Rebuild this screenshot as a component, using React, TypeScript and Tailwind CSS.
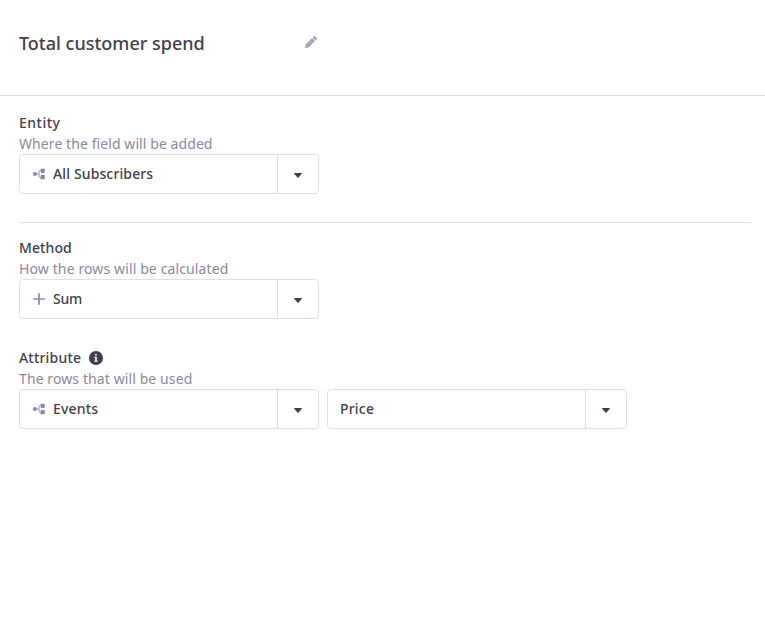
import type { ReactNode } from 'react'

function NodesIcon() {
  return (
    <svg width="14" height="14" viewBox="0 0 14 14" fill="#8c89a6" className="shrink-0">
      <circle cx="2.900" cy="7" r="2.100" />
      <path d="M4 6.500h2v1H4z" />
      <path d="M9.500 3.300h-.7C7.600 3.300 7 4 7 5.300v3.400c0 1.300.6 2 1.800 2h.7" fill="none" stroke="#8c89a6" strokeWidth="1" />
      <rect x="8.600" y="1.700" width="4.200" height="4.200" rx=".8" />
      <rect x="8.600" y="8.100" width="4.200" height="4.200" rx=".8" />
    </svg>
  )
}

function PlusIcon() {
  return (
    <svg width="14" height="14" viewBox="0 0 14 14" fill="none" stroke="#8c89a6" strokeWidth="1.700" className="shrink-0">
      <path d="M7 1.200v11.600M1.200 7h11.600" />
    </svg>
  )
}

function PencilIcon() {
  return (
    <svg width="14" height="14" viewBox="0 0 14 14" fill="#a9a6c0">
      <path d="M1 13l.5-3.500 6.500-6.500 3 3-6.500 6.500z" />
      <path d="M8.600 2.400l.9-.9c.6-.6 1.300-.6 1.900 0l1.100 1.100c.6.6.6 1.300 0 1.900l-.9.9z" />
    </svg>
  )
}

function InfoIcon() {
  return (
    <svg width="14" height="14" viewBox="0 0 14 14">
      <circle cx="7" cy="7" r="7" fill="#41404d" />
      <path d="M6.100 3h1.700v1.600H6.100zM5.300 5.800h2.500v3.900h.9v1H5.300v-1h.9V6.800h-.9z" fill="#fff" />
    </svg>
  )
}

function Select({ icon, children }: { icon?: ReactNode; children: ReactNode }) {
  return (
    <button type="button" className="flex h-10 w-[300px] rounded border border-[#dfdeec] bg-white text-left">
      <span className="flex h-full flex-1 items-center gap-[7px] pl-3 text-sm font-medium text-[#41404d]">
        {icon}
        {children}
      </span>
      <span className="flex h-full w-[41px] items-center justify-center border-l border-[#dfdeec]">
        <svg width="8" height="5" viewBox="0 0 8 5" fill="#41404d" className="mt-[3px]">
          <path d="M.5 0h7c.4 0 .6.500.3.800L4.600 4.500c-.3.400-.9.400-1.200 0L.2.800C-.1.500.1 0 .5 0z" />
        </svg>
      </span>
    </button>
  )
}

function Label({ children }: { children: ReactNode }) {
  return <h2 className="flex h-[21px] items-center text-sm leading-[21px] font-medium text-[#41404d]">{children}</h2>
}

function Hint({ children }: { children: ReactNode }) {
  return <p className="h-[21px] text-sm leading-[21px] text-[#8c89a0]">{children}</p>
}

export default function App() {
  return (
    <div className="min-h-[630px] bg-white font-['Noto_Sans',sans-serif]">
      <header className="flex h-24 items-start border-b border-[#d9d9dc] pt-[30px] pl-[19px]">
        <h1 className="w-[285px] text-lg leading-[27px] font-medium text-[#41404d]">Total customer spend</h1>
        <button type="button" aria-label="Edit name" className="mt-[5px]">
          <PencilIcon />
        </button>
      </header>
      <main className="pr-[14px] pl-[19px]">
        <section className="h-[127px] border-b border-[#dfdeec] pt-4">
          <Label><span className="tracking-[0.500px]">Entity</span></Label>
          <Hint><span className="tracking-[0.080px]">Where the field will be added</span></Hint>
          <Select icon={<NodesIcon />}><span className="tracking-[0.130px]">All Subscribers</span></Select>
        </section>
        <section className="pt-[14px]">
          <Label><span className="tracking-[0.100px]">Method</span></Label>
          <Hint><span className="tracking-[0.120px]">How the rows will be calculated</span></Hint>
          <Select icon={<PlusIcon />}><span className="tracking-[-0.200px]">Sum</span></Select>
        </section>
        <section className="pt-7">
          <Label>
            <span className="mr-2 tracking-[0.200px]">Attribute</span>
            <InfoIcon />
          </Label>
          <Hint><span className="tracking-[0.100px]">The rows that will be used</span></Hint>
          <div className="flex gap-2">
            <Select icon={<NodesIcon />}><span className="tracking-[0.170px]">Events</span></Select>
            <Select><span className="tracking-[0.200px]">Price</span></Select>
          </div>
        </section>
      </main>
    </div>
  )
}
